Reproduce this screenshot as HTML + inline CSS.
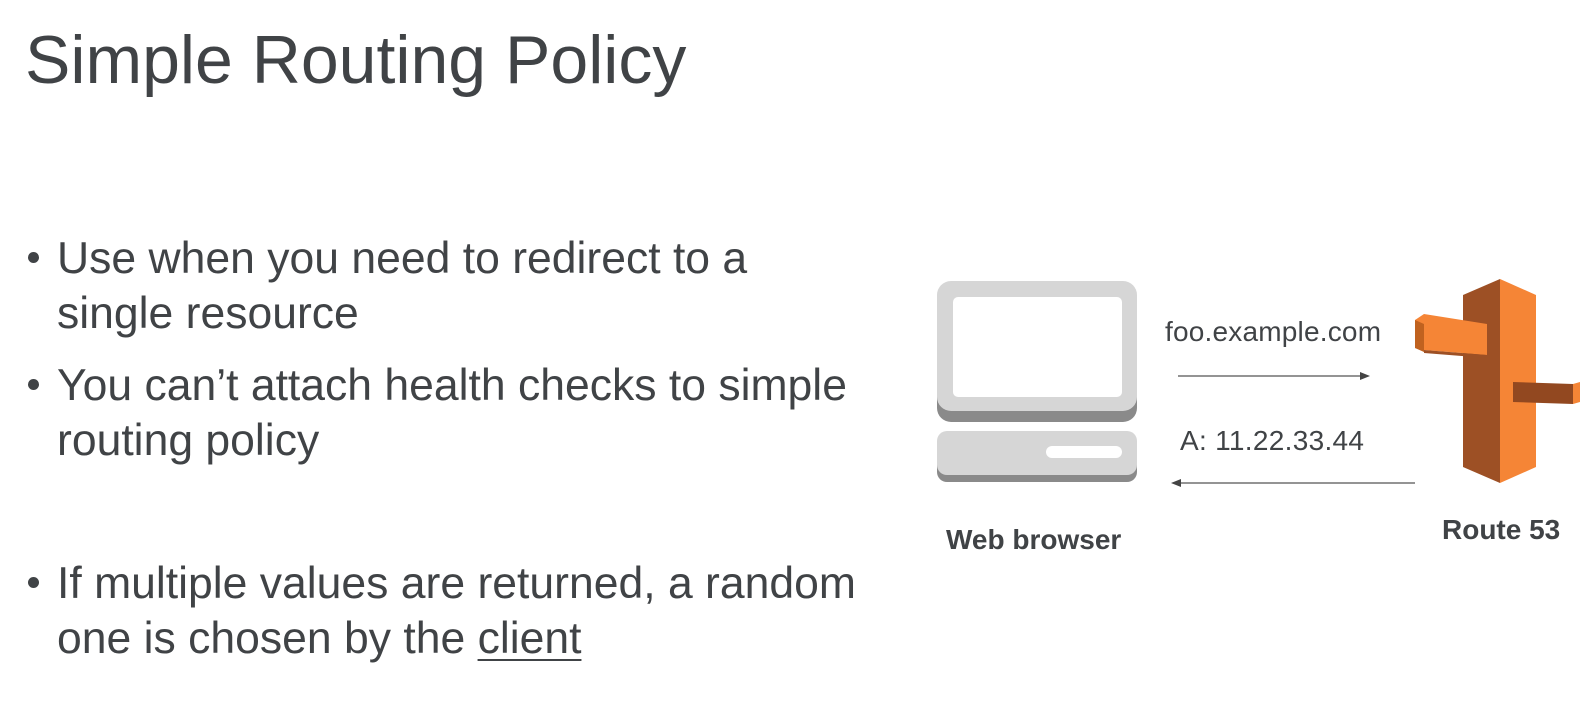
<!DOCTYPE html>
<html><head><meta charset="utf-8"><style>
html,body{margin:0;padding:0;background:#fff;}
body{width:1595px;height:701px;position:relative;overflow:hidden;font-family:"Liberation Sans",sans-serif;color:#404346;}
.t{position:absolute;white-space:nowrap;line-height:1;}
.b{font-size:44.5px;}
.dot{position:absolute;width:11px;height:11px;border-radius:50%;background:#404346;}
</style></head><body>
<div class="t" style="left:25px;top:26px;font-size:68px;">Simple Routing Policy</div>

<div class="dot" style="left:28px;top:252px"></div>
<div class="t b" style="left:57px;top:237px">Use when you need to redirect to a</div>
<div class="t b" style="left:57px;top:292px">single resource</div>
<div class="dot" style="left:28px;top:379px"></div>
<div class="t b" style="left:57px;top:364px">You can’t attach health checks to simple</div>
<div class="t b" style="left:57px;top:419px">routing policy</div>
<div class="dot" style="left:28px;top:577px"></div>
<div class="t b" style="left:57px;top:562px">If multiple values are returned, a random</div>
<div class="t b" style="left:57px;top:617px">one is chosen by the <span style="text-decoration:underline;text-underline-offset:6px;text-decoration-thickness:2px">client</span></div>

<svg style="position:absolute;left:0;top:0" width="1595" height="701">
 <!-- monitor -->
 <rect x="937" y="292" width="200" height="130" rx="14" fill="#8a8a8a"/>
 <rect x="937" y="281" width="200" height="130" rx="14" fill="#d6d6d6"/>
 <rect x="953" y="297" width="169" height="100" rx="5" fill="#fff"/>
 <rect x="937" y="437" width="200" height="45" rx="10" fill="#8a8a8a"/>
 <rect x="937" y="431" width="200" height="44" rx="10" fill="#d6d6d6"/>
 <rect x="1046" y="446" width="76" height="12" rx="6" fill="#fff"/>
 <!-- arrows -->
 <line x1="1178" y1="376" x2="1362" y2="376" stroke="#555" stroke-width="1.3"/>
 <polygon points="1370,376 1360,372 1360,380" fill="#444"/>
 <line x1="1180" y1="483" x2="1415" y2="483" stroke="#555" stroke-width="1.3"/>
 <polygon points="1171,483 1181,479 1181,487" fill="#444"/>
 <!-- route 53 -->
 <polygon points="1500,279 1463,295 1463,467 1500,483" fill="#9d5025"/>
 <polygon points="1500,279 1536,295 1536,467 1500,483" fill="#f58536"/>
 <polygon points="1415,320 1424,314 1487,324 1487,355 1424,350 1415,348" fill="#f58536"/>
 <polygon points="1415,320 1424,324 1424,352 1415,348" fill="#c0621f"/>
 <polygon points="1424,350 1487,355 1487,358 1424,353" fill="#9d5025"/>
 <polygon points="1513,382 1573,384 1573,404 1513,402" fill="#924820"/>
 <polygon points="1573,384 1580,382 1580,402 1573,404" fill="#f58536"/>
</svg>

<div class="t" style="left:1165px;top:318px;font-size:28px;letter-spacing:0.2px;">foo.example.com</div>
<div class="t" style="left:1180px;top:427px;font-size:28px;letter-spacing:0.3px;">A: 11.22.33.44</div>
<div class="t" style="left:946px;top:526px;font-size:28px;font-weight:bold;">Web browser</div>
<div class="t" style="left:1442px;top:516px;font-size:28px;font-weight:bold;">Route 53</div>
</body></html>
